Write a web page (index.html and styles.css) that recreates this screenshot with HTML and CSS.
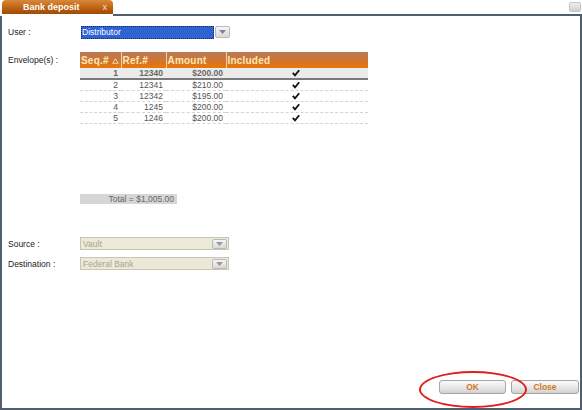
FILE: index.html
```html
<!DOCTYPE html>
<html>
<head>
<meta charset="utf-8">
<title>Bank deposit</title>
<link rel="stylesheet" href="styles.css">
</head>
<body>
<div class="titlebar">
  <div class="tab"><span class="tab-title">Bank deposit</span><span class="tab-close">x</span></div>
  <div class="titlefill"><div class="winbtn"></div></div>
</div>
<div class="frame">
  <div class="row row-user">
    <span class="lbl">User :</span>
    <div class="select select-active">
      <span class="val">Distributor</span>
      <span class="ddbtn"><svg width="7" height="4" viewBox="0 0 7 4"><path d="M0 0H7L3.5 4Z" fill="#8a7aa0"/></svg></span>
    </div>
  </div>
  <div class="row row-env">
    <span class="lbl lbl-top">Envelope(s) :</span>
    <table class="grid">
      <colgroup><col class="c1"><col class="c2"><col class="c3"><col class="c4"></colgroup>
      <thead>
        <tr>
          <th class="h-seq">Seq.#<svg class="sort" width="7" height="6" viewBox="0 0 7 6"><path d="M3.5 0.8L6.3 5.3H0.7Z" fill="none" stroke="#f6e2c0" stroke-width="0.9"/></svg></th>
          <th>Ref.#</th>
          <th>Amount</th>
          <th>Included</th>
        </tr>
      </thead>
      <tbody>
        <tr class="sel"><td class="n">1</td><td class="n">12340</td><td class="n">$200.00</td><td class="chk"><svg width="8" height="8" viewBox="0 0 8 8"><path d="M0.8 3.8L3 6.3L7.2 1.2" fill="none" stroke="#111" stroke-width="1.8"/></svg></td></tr>
        <tr><td class="n">2</td><td class="n">12341</td><td class="n">$210.00</td><td class="chk"><svg width="8" height="8" viewBox="0 0 8 8"><path d="M0.8 3.8L3 6.3L7.2 1.2" fill="none" stroke="#111" stroke-width="1.8"/></svg></td></tr>
        <tr><td class="n">3</td><td class="n">12342</td><td class="n">$195.00</td><td class="chk"><svg width="8" height="8" viewBox="0 0 8 8"><path d="M0.8 3.8L3 6.3L7.2 1.2" fill="none" stroke="#111" stroke-width="1.8"/></svg></td></tr>
        <tr><td class="n">4</td><td class="n">1245</td><td class="n">$200.00</td><td class="chk"><svg width="8" height="8" viewBox="0 0 8 8"><path d="M0.8 3.8L3 6.3L7.2 1.2" fill="none" stroke="#111" stroke-width="1.8"/></svg></td></tr>
        <tr><td class="n">5</td><td class="n">1246</td><td class="n">$200.00</td><td class="chk"><svg width="8" height="8" viewBox="0 0 8 8"><path d="M0.8 3.8L3 6.3L7.2 1.2" fill="none" stroke="#111" stroke-width="1.8"/></svg></td></tr>
      </tbody>
    </table>
  </div>
  <div class="row row-total">
    <span class="lbl"></span>
    <div class="total">Total = $1,005.00</div>
  </div>
  <div class="row row-source">
    <span class="lbl">Source :</span>
    <div class="select select-disabled">
      <span class="val">Vault</span>
      <span class="ddbtn"><svg width="7" height="4" viewBox="0 0 7 4"><path d="M0 0H7L3.5 4Z" fill="#9a9a9a"/></svg></span>
    </div>
  </div>
  <div class="row row-dest">
    <span class="lbl">Destination :</span>
    <div class="select select-disabled">
      <span class="val">Federal Bank</span>
      <span class="ddbtn"><svg width="7" height="4" viewBox="0 0 7 4"><path d="M0 0H7L3.5 4Z" fill="#9a9a9a"/></svg></span>
    </div>
  </div>
  <div class="actions">
    <span class="btn-wrap"><button class="btn btn-ok">OK</button><span class="ring"></span></span>
    <button class="btn btn-close">Close</button>
  </div>
</div>
</body>
</html>
```
FILE: styles.css
```css
* { box-sizing: border-box; }
html, body { margin: 0; padding: 0; background: #fff; }
body {
  width: 582px;
  height: 410px;
  overflow: hidden;
  font-family: "Liberation Sans", Arial, sans-serif;
  font-size: 8.5px;
  color: #222;
}
.titlebar {
  display: flex;
  height: 16px;
}
.tab {
  width: 111px;
  height: 14px;
  margin-left: 2px;
  border-radius: 4px 4px 0 0;
  background: linear-gradient(#d8893c 0%, #c46a18 45%, #b25a0c 70%, #9c4c08 100%);
  display: flex;
  align-items: center;
  color: #fff;
  font-weight: bold;
  font-size: 9px;
}
.tab-title { margin-left: 21px; }
.tab-close {
  margin-left: auto;
  margin-right: 6px;
  font-weight: normal;
  font-size: 9px;
  color: #f3e0cc;
}
.titlefill {
  flex: 1;
  border-bottom: 2px solid #4f5f6e;
  display: flex;
  justify-content: flex-end;
  align-items: flex-start;
}
.winbtn {
  width: 12px;
  height: 10px;
  margin-top: 2px;
  margin-right: 1px;
  border: 1px solid #c4c4c4;
  border-radius: 2px;
  background: linear-gradient(#f0f0f0, #cfcfcf);
}
.frame {
  height: 394px;
  border-left: 2px solid #4f5f6e;
  border-right: 2px solid #4f5f6e;
  border-bottom: 2px solid #4f5f6e;
  padding: 9px 1px 14px 6px;
  display: flex;
  flex-direction: column;
}
.row {
  display: flex;
  align-items: center;
}
.lbl {
  width: 72px;
  flex: none;
  color: #222;
}
.row-env { align-items: flex-start; margin-top: 13px; }
.lbl-top { padding-top: 3px; }
.select {
  width: 150px;
  height: 14px;
  display: flex;
  align-items: center;
  padding-left: 1px;
}
.select .val { flex: 1; padding-left: 1px; }
.ddbtn {
  width: 15px;
  height: 12px;
  border: 1px solid #b8b8b8;
  border-radius: 2px;
  background: linear-gradient(#f6f6f6, #d8d8d8);
  display: flex;
  align-items: center;
  justify-content: center;
}
.select-active {
  background: #fff;
}
.select-active .val {
  background: #2f62d3;
  color: #fff;
  height: 13px;
  line-height: 13px;
  outline: 1px dotted #1b2a60;
  outline-offset: -1px;
  margin-right: 1px;
}
.select-disabled {
  width: 149px;
  height: 13px;
  background: #ece9d8;
  border: 1px solid #c9c5b2;
  padding-right: 1px;
}
.select-disabled .val { color: #aaa590; }
.select-disabled .ddbtn { height: 10px; }
.row-source { margin-top: 33px; }
.row-dest { margin-top: 7px; }

.grid {
  border-collapse: collapse;
  table-layout: fixed;
  width: 288px;
}
.c1 { width: 41px; }
.c2 { width: 45px; }
.c3 { width: 60px; }
.c4 { width: 142px; }
.grid th {
  height: 16px;
  padding: 0 0 0 1px;
  text-align: left;
  font-size: 10px;
  font-weight: bold;
  letter-spacing: 0.2px;
  color: #fde7b8;
  background: linear-gradient(#b97a5a 0%, #c8773c 40%, #dc7418 75%, #e8780c 100%);
  border-left: 1px solid #f3d2a6;
  white-space: nowrap;
  overflow: hidden;
}
.grid th:first-child { border-left: none; }
.sort { margin-left: 3px; vertical-align: 0; }
.grid td {
  height: 11px;
  padding: 0 3px 0 0;
  font-size: 8.5px;
  color: #555;
  border-bottom: 1px dashed #d4d4d4;
  line-height: 10px;
}
.grid td.n { text-align: right; }
.grid td.chk { text-align: left; padding-left: 66px; }
.grid td.chk svg { display: block; }
.grid tr.sel td {
  background: #ebebeb;
  font-weight: bold;
  color: #666;
  border-bottom: 2px solid #7a7a7a;
}

.row-total { margin-top: 70px; }
.total {
  width: 97px;
  height: 10px;
  line-height: 10px;
  background: #d6d6d6;
  color: #666;
  text-align: right;
  padding-right: 3px;
  font-size: 8.5px;
}

.actions {
  margin-top: auto;
  display: flex;
  justify-content: flex-end;
  gap: 5px;
}
.btn-wrap { position: relative; display: flex; }
.btn {
  height: 14px;
  padding: 0;
  border: 1px solid #a5a5a5;
  border-radius: 3px;
  background: linear-gradient(#fafafa 0%, #e9e9e9 50%, #d2d2d2 100%);
  font-family: "Liberation Sans", Arial, sans-serif;
  font-size: 8.5px;
  font-weight: bold;
  color: #d07a22;
}
.btn-ok { width: 67px; }
.btn-close { width: 68px; }
.ring {
  position: absolute;
  left: -20px;
  top: -9px;
  width: 108px;
  height: 37px;
  border: 2.5px solid #e31c1c;
  border-radius: 50%;
}
```
